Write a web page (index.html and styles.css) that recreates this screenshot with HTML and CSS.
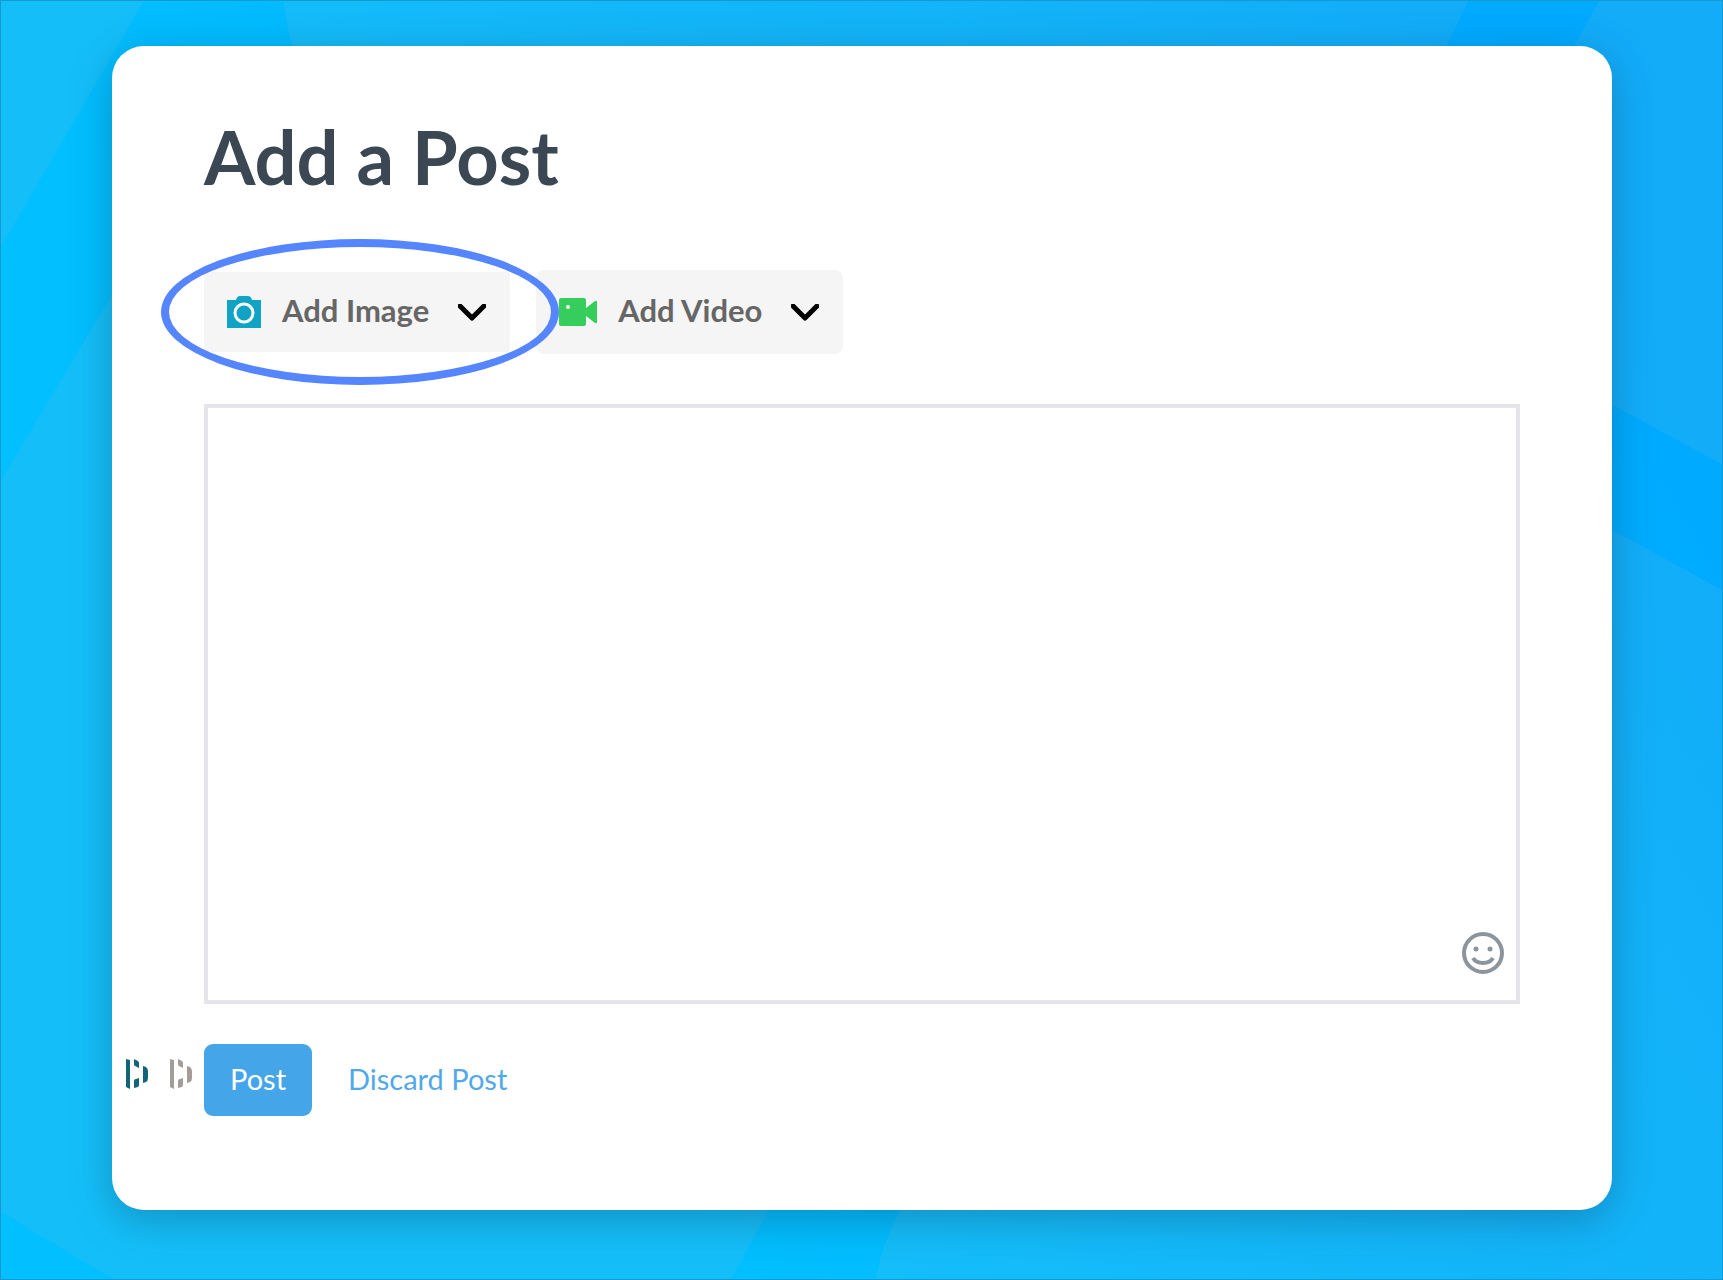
FILE: index.html
```html
<!DOCTYPE html>
<html lang="en">
<head>
  <meta charset="UTF-8" />
  <meta name="viewport" content="width=device-width, initial-scale=1.0"/>
  <title>Add a Post</title>
  <link rel="stylesheet" href="styles.css">
</head>
<body>

  <!-- Background shapes -->
  <svg class="backdrop" viewBox="0 0 1723 1280" preserveAspectRatio="none" aria-hidden="true">
    <path d="M0 0H143L0 246Z"/>
    <path d="M0 480L112 293L900 700L768 1212L731 1280H112L0 1213Z"/>
    <path d="M283 0H1469L1440 60H298Q285 30 283 0Z"/>
    <path d="M1600 0H1723V464L1612 404L1500 345V180Z"/>
    <path d="M1723 590L1612 529L1300 400L900 1212Q880 1250 876 1280H1723Z"/>
  </svg>

  <main class="card">
    <h1>Add a Post</h1>

    <div class="media-buttons">
      <div class="highlight">
        <button type="button" class="media-btn image-btn">
          <svg class="camera" width="34" height="32" viewBox="0 0 34 32" aria-hidden="true">
            <path fill="#11a3c5" d="M0 4H9Q10 0 13 0H21Q24 0 25 4H34V32H0Z"/>
            <circle cx="17" cy="17" r="9" fill="none" stroke="#fff" stroke-width="3"/>
          </svg>
          <span>Add Image</span>
          <svg class="chevron" width="28" height="17" viewBox="0 0 28 17" aria-hidden="true"><path d="M2 2L14 14L26 2"/></svg>
        </button>
      </div>
      <button type="button" class="media-btn">
        <svg class="video" width="38" height="28" viewBox="0 0 38 28" aria-hidden="true">
          <path fill="#35ce5c" d="M2 0H25Q27 0 27 2V10L36 3Q38 2 38 4V24Q38 26 36 25L27 18V26Q27 28 25 28H2Q0 28 0 26V2Q0 0 2 0Z"/>
          <circle cx="9" cy="9" r="2" fill="#fff"/>
        </svg>
        <span>Add Video</span>
        <svg class="chevron" width="28" height="17" viewBox="0 0 28 17" aria-hidden="true"><path d="M2 2L14 14L26 2"/></svg>
      </button>
    </div>

    <div class="editor">
      <textarea id="postText" aria-label="Post text"></textarea>
      <button type="button" class="emoji-btn" aria-label="Insert emoji">
        <svg width="42" height="42" viewBox="0 0 42 42" aria-hidden="true">
          <circle cx="21" cy="21" r="19" fill="none" stroke="#8b959d" stroke-width="4"/>
          <circle cx="14" cy="17" r="2.5" fill="#8b959d"/>
          <circle cx="28" cy="17" r="2.5" fill="#8b959d"/>
          <path d="M11 26Q14 31 21 31Q28 31 31 26" fill="none" stroke="#8b959d" stroke-width="4"/>
        </svg>
      </button>
    </div>

    <div class="actions">
      <div class="autofill">
        <svg class="mark" width="22" height="32" viewBox="0 0 22 32" aria-hidden="true">
          <path d="M0 1L4 2V31L0 29ZM8 1L12 3Q13 4 13 5V10L9 8Q8 8 8 6ZM8 23Q8 21 10 21L13 20V27Q13 28 12 29L8 30ZM17 8L20 9Q22 11 22 13V20Q22 23 20 24L17 25Z"/>
        </svg>
        <svg class="mark mark-grey" width="22" height="32" viewBox="0 0 22 32" aria-hidden="true">
          <path d="M0 1L4 2V31L0 29ZM8 1L12 3Q13 4 13 5V10L9 8Q8 8 8 6ZM8 23Q8 21 10 21L13 20V27Q13 28 12 29L8 30ZM17 8L20 9Q22 11 22 13V20Q22 23 20 24L17 25Z"/>
        </svg>
      </div>
      <button type="submit" class="post-btn">Post</button>
      <a href="#" class="discard">Discard Post</a>
    </div>
  </main>

</body>
</html>
```
FILE: styles.css
```css
* {
  box-sizing: border-box;
}
body {
  position: relative;
  font-family: Lato, sans-serif;
  background: linear-gradient(60deg, #02bfff 30%, #00aaff 90%);
  border: 1px solid #1599d0;
  margin: 0;
  padding: 45px 110px 69px 111px;
  min-height: 100vh;
}
.backdrop {
  position: absolute;
  inset: 0;
  width: 100%;
  height: 100%;
  fill: #c8c8c8;
  opacity: 0.09;
}
.card {
  position: relative;
  background: white;
  border-radius: 32px;
  padding: 68px 92px 94px;
  box-shadow: 0 10px 40px rgba(20, 60, 90, 0.35);
}
h1 {
  margin: 0 0 70px;
  color: #3b4752;
  font-size: 74px;
  line-height: 86px;
  font-weight: bold;
}
.media-buttons {
  display: flex;
  align-items: center;
  gap: 26px;
  margin-bottom: 50px;
}
.highlight {
  position: relative;
}
/* Oval drawn around the Add Image button */
.highlight::after {
  content: "";
  position: absolute;
  inset: -33px -49px -33px -43px;
  border: 8px solid #5585ff;
  border-radius: 50%;
  pointer-events: none;
  z-index: 1;
}
.media-btn {
  display: flex;
  align-items: center;
  height: 84px;
  padding: 0 24px 0 23px;
  background: #f5f5f5;
  border: none;
  border-radius: 8px;
  color: #666;
  font-family: inherit;
  font-size: 31px;
  font-weight: bold;
  cursor: pointer;
}
.image-btn {
  height: 80px;
  border-radius: 4px;
}
.media-btn span {
  margin: 0 29px 0 21px;
  padding-bottom: 4px;
}
.chevron {
  fill: none;
  stroke: black;
  stroke-width: 5;
  stroke-linecap: round;
  stroke-linejoin: round;
}
.editor {
  position: relative;
  margin-bottom: 40px;
}
textarea {
  display: block;
  width: 100%;
  height: 600px;
  padding: 20px;
  border: 4px solid #e4e4ea;
  outline: none;
  resize: none;
  background: white;
  font-family: inherit;
  font-size: 29px;
}
.emoji-btn {
  position: absolute;
  right: 16px;
  bottom: 30px;
  padding: 0;
  border: none;
  background: none;
  cursor: pointer;
}
.emoji-btn svg {
  display: block;
}
.actions {
  position: relative;
  display: flex;
  align-items: center;
  gap: 36px;
}
/* Password manager marks, left of the Post button */
.autofill {
  position: absolute;
  right: 100%;
  top: 14px;
  display: flex;
  gap: 22px;
  padding-right: 12px;
}
.mark {
  fill: #13647a;
}
.mark-grey {
  fill: #a39c99;
}
.post-btn {
  height: 72px;
  padding: 0 26px 4px;
  background: #44a5e8;
  border: none;
  border-radius: 9px;
  color: white;
  font-family: inherit;
  font-size: 29px;
  cursor: pointer;
}
.discard {
  padding-bottom: 4px;
  color: #51a9ea;
  font-size: 29px;
  text-decoration: none;
}
```
